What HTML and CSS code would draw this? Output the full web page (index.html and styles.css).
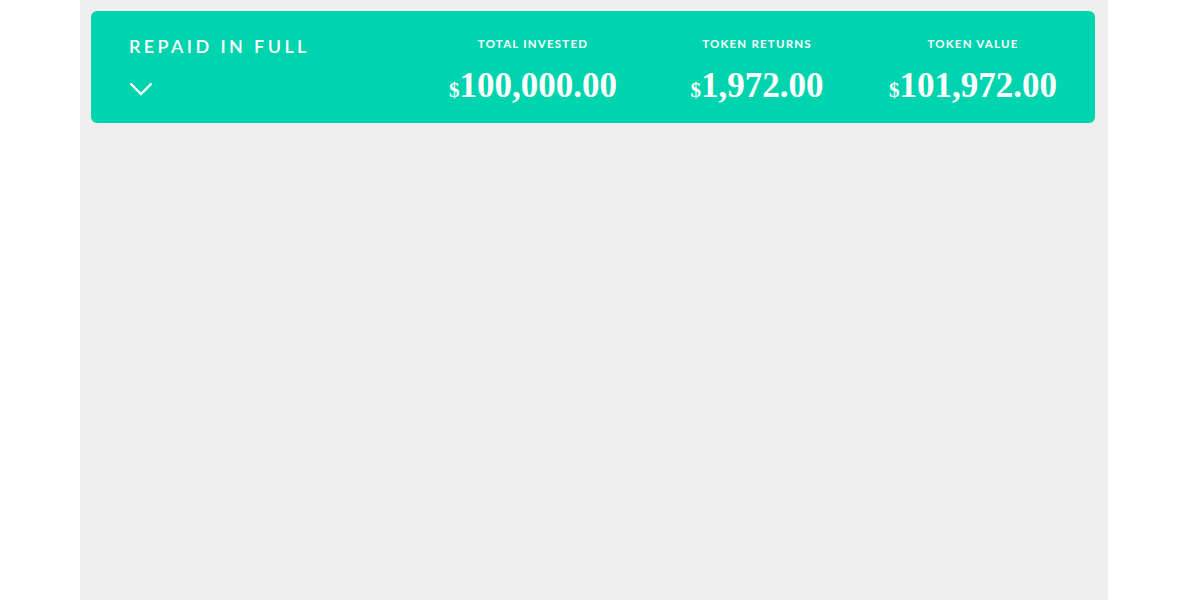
FILE: index.html
```html
<!DOCTYPE html>
<html lang="en">
<head>
    <meta charset="UTF-8">
    <meta name="viewport" content="width=device-width, initial-scale=1.0">
    <title>Repaid in Full</title>
    <link rel="stylesheet" href="styles.css">
</head>
<body>
    <div class="page">
        <div class="summary">
            <div class="status">
                <div class="status-title">REPAID IN FULL</div>
                <svg class="chevron" width="24" height="14" viewBox="0 0 24 14">
                    <polyline points="1.5,1.5 12,12 22.5,1.5" fill="none" stroke="#fff" stroke-width="2.4"/>
                </svg>
            </div>
            <div class="stat">
                <div class="stat-label">TOTAL INVESTED</div>
                <div class="stat-value"><span class="currency">$</span>100,000.00</div>
            </div>
            <div class="stat">
                <div class="stat-label">TOKEN RETURNS</div>
                <div class="stat-value"><span class="currency">$</span>1,972.00</div>
            </div>
            <div class="stat">
                <div class="stat-label">TOKEN VALUE</div>
                <div class="stat-value"><span class="currency">$</span>101,972.00</div>
            </div>
        </div>
    </div>
</body>
</html>
```

FILE: styles.css
```css
body {
    margin: 0;
    background-color: #ffffff;
    font-family: Lato, "Open Sans", Arial, sans-serif;
}
.page {
    width: 1028px;
    min-height: 600px;
    margin-left: 80px;
    padding: 11px 13px 11px 11px;
    box-sizing: border-box;
    background-color: #eeeeee;
}
.summary {
    display: grid;
    grid-template-columns: 1fr 224px 224px 208px;
    height: 112px;
    padding-right: 18px;
    background-color: #00d4ae;
    border-radius: 6px;
    color: #ffffff;
}
.status {
    padding: 24px 0 0 38px;
}
.status-title {
    font-size: 18px;
    font-weight: 600;
    letter-spacing: 3.4px;
    line-height: 22px;
}
.chevron {
    display: block;
    margin-top: 25px;
}
.stat {
    text-align: center;
    padding-top: 26px;
}
.stat-label {
    font-size: 11.5px;
    font-weight: 700;
    letter-spacing: 1.2px;
    line-height: 14px;
}
.stat-value {
    margin-top: 17px;
    font-family: "Liberation Serif", "Times New Roman", serif;
    font-weight: 700;
    font-size: 35px;
    line-height: 36px;
}
.currency {
    font-size: 21px;
}
```
